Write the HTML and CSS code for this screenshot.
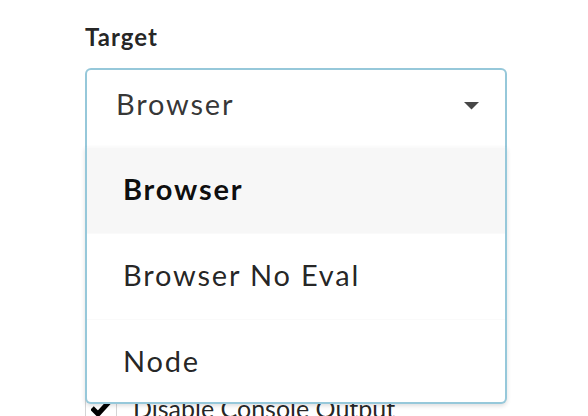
FILE: index.html
```html
<!DOCTYPE html>
<html lang="en">
<head>
  <meta charset="UTF-8" />
  <meta name="viewport" content="width=device-width, initial-scale=1.0"/>
  <title>Target</title>
  <link rel="stylesheet" href="styles.css">
</head>
<body>
  <div class="field">
    <label class="field-label">Target</label>
    <div class="dropdown active">
      <div class="dropdown-text">Browser</div>
      <svg class="dropdown-icon" width="15" height="8" viewBox="0 0 15 8">
        <path d="M0 0 H15 L7.5 7.5 Z" fill="#474747"/>
      </svg>
      <div class="menu">
        <div class="item selected">Browser</div>
        <div class="item">Browser No Eval</div>
        <div class="item">Node</div>
      </div>
    </div>
  </div>

  <div class="checkbox-row">
    <div class="checkbox-box">
      <svg width="20" height="18" viewBox="0 0 20 18">
        <path d="M1 9 L7 15 L19 2" fill="none" stroke="#000" stroke-width="5" stroke-linejoin="round"/>
      </svg>
    </div>
    <span class="checkbox-label">Disable Console Output</span>
  </div>
</body>
</html>
```

FILE: styles.css
```css
body {
  font-family: Lato, "Open Sans", sans-serif;
  background: #fff;
  margin: 0;
  padding: 23px 0 0 85px;
  color: rgba(0, 0, 0, 0.87);
}

.field {
  width: 422px;
}

.field-label {
  display: block;
  font-size: 24px;
  line-height: 28px;
  letter-spacing: 1px;
  font-weight: bold;
  color: rgba(0, 0, 0, 0.87);
  margin-bottom: 17px;
}

.dropdown {
  position: relative;
  display: flex;
  align-items: flex-start;
  justify-content: space-between;
  box-sizing: border-box;
  width: 422px;
  height: 79px;
  padding: 17px 26px 0 29px;
  border: 2px solid #96c8da;
  border-radius: 6px;
  background: #fff;
  font-size: 29px;
  line-height: 1.2;
  letter-spacing: 1.8px;
  z-index: 10;
}

.dropdown.active {
  border-bottom: none;
  border-radius: 6px 6px 0 0;
}

.dropdown-text {
  color: rgba(0, 0, 0, 0.8);
}

.dropdown-icon {
  margin-top: 15px;
}

.menu {
  position: absolute;
  top: 100%;
  left: -2px;
  right: -2px;
  max-height: 255px;
  overflow: hidden;
  background: #fff;
  border: 2px solid #96c8da;
  border-top: none;
  border-radius: 0 0 6px 6px;
  box-shadow: 0 2px 4px 0 rgba(34, 36, 38, 0.15);
}

.item {
  border-top: 1px solid #fafafa;
  padding: 24px 36px 28px 36px;
  line-height: 33px;
  color: rgba(0, 0, 0, 0.87);
}

.item.selected {
  background: #f7f7f7;
  font-weight: bold;
  color: rgba(0, 0, 0, 0.95);
}

.checkbox-row {
  display: flex;
  align-items: center;
  gap: 16px;
  margin-top: 245px;
  height: 32px;
}

.checkbox-box {
  box-sizing: border-box;
  width: 32px;
  height: 32px;
  border: 1px solid #d4d4d5;
  border-radius: 4px;
  display: flex;
  align-items: center;
  justify-content: center;
}

.checkbox-label {
  font-size: 25px;
  line-height: 32px;
  color: rgba(0, 0, 0, 0.87);
}
```
